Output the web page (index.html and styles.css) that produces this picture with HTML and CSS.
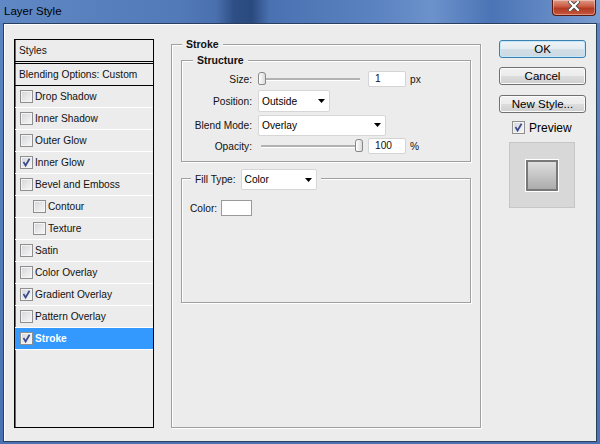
FILE: index.html
```html
<!DOCTYPE html>
<html lang="en">
<head>
    <meta charset="UTF-8">
    <title>Layer Style</title>
    <link rel="stylesheet" href="styles.css">
</head>
<body>
    <div class="window">
        <div class="titlebar">
            <span class="title">Layer Style</span>
            <div class="close">
                <svg width="12" height="10" viewBox="0 0 12 10">
                    <path d="M2 1 L10 9 M10 1 L2 9" stroke="#4a4a4a" stroke-width="4" stroke-linecap="square"/>
                    <path d="M2 1 L10 9 M10 1 L2 9" stroke="#fff" stroke-width="2.2" stroke-linecap="square"/>
                </svg>
            </div>
        </div>

        <div class="dialog">
            <!-- styles list -->
            <div class="styles-list">
                <div class="list-head">Styles</div>
                <div class="list-blend">Blending Options: Custom</div>
                <div class="list-item"><span class="check"></span>Drop Shadow</div>
                <div class="list-item"><span class="check"></span>Inner Shadow</div>
                <div class="list-item"><span class="check"></span>Outer Glow</div>
                <div class="list-item"><span class="check"><svg viewBox="0 0 11 11"><path d="M2.5 5 L4.6 8.5 L8.5 1.8"/></svg></span>Inner Glow</div>
                <div class="list-item"><span class="check"></span>Bevel and Emboss</div>
                <div class="list-item sub"><span class="check"></span>Contour</div>
                <div class="list-item sub"><span class="check"></span>Texture</div>
                <div class="list-item"><span class="check"></span>Satin</div>
                <div class="list-item"><span class="check"></span>Color Overlay</div>
                <div class="list-item"><span class="check"><svg viewBox="0 0 11 11"><path d="M2.5 5 L4.6 8.5 L8.5 1.8"/></svg></span>Gradient Overlay</div>
                <div class="list-item"><span class="check"></span>Pattern Overlay</div>
                <div class="list-item selected"><span class="check"><svg viewBox="0 0 11 11"><path d="M2.5 5 L4.6 8.5 L8.5 1.8"/></svg></span>Stroke</div>
            </div>

            <!-- stroke settings -->
            <div class="group stroke-group">
                <div class="group-title bold stroke-title">Stroke</div>

                <div class="group structure">
                    <div class="group-title bold structure-title">Structure</div>
                    <div class="fields">
                        <span class="label">Size:</span>
                        <div class="ctl">
                            <div class="slider"><span class="thumb" style="left: 0px;"></span></div>
                            <div class="num">1</div>
                            <span class="unit">px</span>
                        </div>

                        <span class="label">Position:</span>
                        <div class="ctl">
                            <div class="select sel-position">Outside<svg width="7" height="4" viewBox="0 0 7 4"><polygon points="0,0 7,0 3.5,4"/></svg></div>
                        </div>

                        <span class="label">Blend Mode:</span>
                        <div class="ctl">
                            <div class="select sel-blend">Overlay<svg width="7" height="4" viewBox="0 0 7 4"><polygon points="0,0 7,0 3.5,4"/></svg></div>
                        </div>

                        <span class="label">Opacity:</span>
                        <div class="ctl">
                            <div class="slider opacity-slider"><span class="thumb" style="left: 94px;"></span></div>
                            <div class="num">100</div>
                            <span class="unit">%</span>
                        </div>
                    </div>
                </div>

                <div class="group fill">
                    <div class="group-title fill-title">
                        Fill Type:
                        <div class="select sel-fill">Color<svg width="7" height="4" viewBox="0 0 7 4"><polygon points="0,0 7,0 3.5,4"/></svg></div>
                    </div>
                    <div class="color-row">Color: <span class="swatch"></span></div>
                </div>
            </div>

            <!-- buttons -->
            <div class="actions">
                <div class="btn default">OK</div>
                <div class="btn cancel">Cancel</div>
                <div class="btn new-style">New Style...</div>
                <div class="preview-row">
                    <span class="check"><svg viewBox="0 0 11 11"><path d="M2.5 5 L4.6 8.5 L8.5 1.8"/></svg></span>
                    <span class="preview-label">Preview</span>
                </div>
                <div class="preview-box">
                    <div class="preview-square"></div>
                </div>
            </div>
        </div>
    </div>
</body>
</html>
```

FILE: styles.css
```css
body {
    margin: 0;
    font-family: "Liberation Sans", Arial, sans-serif;
    font-size: 10.2px;
    color: #111;
}
.window {
    width: 600px;
    height: 444px;
    display: flex;
    flex-direction: column;
    background: linear-gradient(#5d84c2, #4a72b2);
}
.titlebar {
    height: 23px;
    display: flex;
    align-items: flex-start;
    background: linear-gradient(90deg, #6088c4 0, #5279b8 30%, #4a70ae 36%, #2e4f85 39%, #2a4a7e 42%, #4a72b2 45%, #5a82c0 62%, #6d92cb 72%, #4a74b6 82%, #7a9cd0 100%);
}
.title {
    padding: 5px 0 0 4px;
    font-size: 11.5px;
    line-height: 13px;
    color: #000;
}
.close {
    margin-left: auto;
    margin-right: 4px;
    width: 44px;
    height: 16px;
    box-sizing: border-box;
    border: 1px solid #5b1a12;
    border-top: none;
    border-radius: 0 0 4px 4px;
    background: linear-gradient(#e09a88, #c9583f 45%, #b03a22 55%, #c8583c);
    box-shadow: inset 0 0 0 1px rgba(255,255,255,0.35);
    display: flex;
    justify-content: center;
    align-items: flex-start;
    padding-top: 1px;
}
.dialog {
    flex: 1;
    margin: 0 3px 2px;
    background: #ececec;
    border: 1px solid #2b3f5e;
    box-shadow: inset 1px 1px #fff;
    display: flex;
    align-items: flex-start;
    padding: 15px 0 0 10px;
}

/* styles list */
.styles-list {
    width: 140px;
    height: 389px;
    box-sizing: border-box;
    border: 1px solid #000;
    box-shadow: inset 1px 0 #6a6a6a;
}
.list-head, .list-blend {
    height: 21px;
    line-height: 21px;
    padding-left: 4px;
}
.list-head {
    border-bottom: 3px double #000;
}
.list-blend {
    border-bottom: 1px solid #000;
}
.list-item {
    height: 21px;
    border-bottom: 1px solid #fff;
    display: flex;
    align-items: center;
    padding-left: 5px;
}
.list-item.sub {
    padding-left: 18px;
}
.list-item.selected {
    background: #3399ff;
    color: #fff;
    font-weight: bold;
}
.check {
    flex: none;
    width: 13px;
    height: 13px;
    box-sizing: border-box;
    border: 1px solid #8f8f8f;
    background: linear-gradient(135deg, #d4d5d8, #f8f8f8);
    box-shadow: inset 0 0 0 1px #f4f4f4;
    margin-right: 2px;
    display: flex;
}
.check svg {
    width: 11px;
    height: 11px;
}
.check path {
    fill: none;
    stroke: #3d4a8e;
    stroke-width: 1.7;
}

/* group boxes */
.group {
    box-sizing: border-box;
    border: 1px solid #a0a0a0;
    box-shadow: 1px 1px 0 #fff, inset 1px 1px 0 #fff;
}
.group-title {
    display: flex;
    align-items: center;
    width: fit-content;
    background: #ececec;
    padding: 0 4px;
    height: 12px;
    margin-top: -7px;
}
.bold {
    font-weight: bold;
    font-size: 10.5px;
}
.stroke-group {
    margin: 5px 0 0 17px;
    width: 310px;
    height: 384px;
    padding: 0 9px;
}
.stroke-title {
    margin-left: 1px;
}
.structure {
    margin-top: 10px;
    width: 290px;
    height: 102px;
}
.structure-title {
    margin-left: 11px;
}
.fields {
    margin-top: 3px;
    display: grid;
    grid-template-columns: 70px auto;
    grid-template-rows: 20px 24px 24px 18px;
    column-gap: 6px;
    align-items: center;
}
.label {
    text-align: right;
}
.ctl {
    display: flex;
    align-items: center;
}
.slider {
    position: relative;
    width: 102px;
    height: 14px;
    margin-right: 8px;
}
.slider::before {
    content: '';
    position: absolute;
    left: 0;
    right: 0;
    top: 6px;
    height: 2px;
    background: #b2b2b2;
    box-shadow: 0 1px #fff;
}
.opacity-slider {
    width: 99px;
    margin-left: 3px;
}
.thumb {
    position: absolute;
    top: 0;
    width: 8px;
    height: 13px;
    box-sizing: border-box;
    border: 1px solid #888;
    border-radius: 3px 3px 2px 2px;
    background: linear-gradient(90deg, #fff, #dadada);
}
.num {
    width: 38px;
    height: 16px;
    box-sizing: border-box;
    border: 1px solid #d4d4d4;
    border-radius: 2px;
    background: #fff;
    padding-left: 6px;
    line-height: 14px;
}
.unit {
    margin-left: 4px;
}
.select {
    display: flex;
    align-items: center;
    justify-content: space-between;
    box-sizing: border-box;
    background: #fff;
    border: 1px solid #d6d6d6;
    border-radius: 2px;
    padding: 0 4px 0 3px;
    color: #000;
}
.sel-position {
    width: 72px;
    height: 22px;
}
.sel-blend {
    width: 128px;
    height: 21px;
}
.fill {
    margin-top: 16px;
    width: 290px;
    height: 125px;
}
.fill-title {
    height: 21px;
    margin-top: -10px;
    margin-left: 9px;
    gap: 5px;
}
.sel-fill {
    width: 76px;
    height: 21px;
}
.color-row {
    margin-top: 10px;
    padding-left: 8px;
    height: 16px;
    display: flex;
    align-items: center;
}
.swatch {
    margin-left: 4px;
    width: 31px;
    height: 16px;
    box-sizing: border-box;
    border: 1px solid #9a9a9a;
    background: #fff;
}

/* right column */
.actions {
    margin-left: 18px;
    width: 87px;
    padding-top: 1px;
    display: flex;
    flex-direction: column;
}
.btn {
    height: 18px;
    box-sizing: border-box;
    border: 1px solid #707070;
    border-radius: 3px;
    background: linear-gradient(#f2f2f2 0, #ebebeb 50%, #dddddd 51%, #cfcfcf 100%);
    box-shadow: inset 0 0 0 1px #fbfbfb;
    text-align: center;
    line-height: 16px;
    font-size: 11.5px;
    color: #000;
}
.btn.default {
    border-color: #3c7fb1;
    background: linear-gradient(#eaf6fd 0, #d9f0fc 50%, #bee6fd 51%, #a7d9f5 100%);
    box-shadow: inset 0 0 0 1px #c4e8fb;
    background: linear-gradient(#eef3f6 0, #e4ecf1 50%, #d3dfe7 51%, #cbd9e2 100%);
}
.cancel {
    margin-top: 9px;
}
.new-style {
    margin-top: 10px;
}
.preview-row {
    margin-top: 8px;
    padding-left: 13px;
    height: 13px;
    display: flex;
    align-items: center;
}
.preview-label {
    margin-left: 2px;
    font-size: 12px;
    color: #000;
}
.preview-box {
    margin: 8px 0 0 10px;
    width: 66px;
    height: 66px;
    box-sizing: border-box;
    border: 1px solid #c6c6c6;
    background: #d8d8d8;
    display: flex;
    align-items: center;
    justify-content: center;
}
.preview-square {
    width: 32px;
    height: 31px;
    box-sizing: border-box;
    border: 2px solid #787878;
    box-shadow: 0 0 0 1px #fff;
    background: linear-gradient(#dedede, #acacac);
}
```
